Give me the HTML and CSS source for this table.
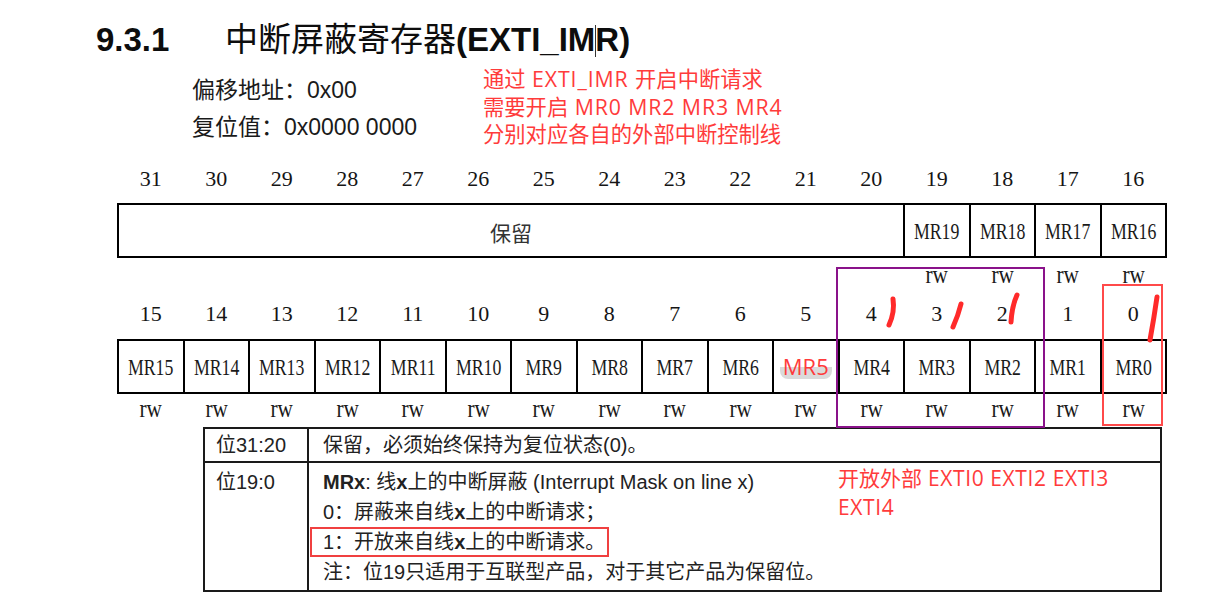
FILE: index.html
```html
<!DOCTYPE html>
<html lang="zh">
<head>
<meta charset="utf-8">
<title>EXTI_IMR</title>
<link rel="stylesheet" href="styles.css">
</head>
<body>
<div class="page">
  <div class="title"><span class="num">9.3.1</span><span class="name">中断屏蔽寄存器<b>(EXTI_IM<span class="caret"></span>R)</b></span></div>
  <div class="info">
    <div class="meta">
      <div>偏移地址：0x00</div>
      <div>复位值：0x0000 0000</div>
    </div>
    <div class="note">通过<span class="lat"> EXTI_IMR </span>开启中断请求<br>需要开启<span class="lat"> MR0 MR2 MR3 MR4</span><br>分别对应各自的外部中断控制线</div>
  </div>

  <div class="reg">
    <div class="grid nums top">
      <span>31</span><span>30</span><span>29</span><span>28</span><span>27</span><span>26</span><span>25</span><span>24</span>
      <span>23</span><span>22</span><span>21</span><span>20</span><span>19</span><span>18</span><span>17</span><span>16</span>
    </div>
    <div class="grid tbl">
      <div class="cell reserved">保留</div>
      <div class="cell"><span class="mr">MR19</span></div>
      <div class="cell"><span class="mr">MR18</span></div>
      <div class="cell"><span class="mr">MR17</span></div>
      <div class="cell"><span class="mr">MR16</span></div>
    </div>
    <div class="grid rws r1">
      <span class="skip"></span>
      <span><i class="rw">rw</i></span><span><i class="rw">rw</i></span><span><i class="rw">rw</i></span><span><i class="rw">rw</i></span>
    </div>
    <div class="grid nums mid">
      <span>15</span><span>14</span><span>13</span><span>12</span><span>11</span><span>10</span><span>9</span><span>8</span>
      <span>7</span><span>6</span><span>5</span><span>4</span><span>3</span><span>2</span><span>1</span><span>0</span>
    </div>
    <div class="grid tbl">
      <div class="cell"><span class="mr">MR15</span></div>
      <div class="cell"><span class="mr">MR14</span></div>
      <div class="cell"><span class="mr">MR13</span></div>
      <div class="cell"><span class="mr">MR12</span></div>
      <div class="cell"><span class="mr">MR11</span></div>
      <div class="cell"><span class="mr">MR10</span></div>
      <div class="cell"><span class="mr">MR9</span></div>
      <div class="cell"><span class="mr">MR8</span></div>
      <div class="cell"><span class="mr">MR7</span></div>
      <div class="cell"><span class="mr">MR6</span></div>
      <div class="cell"><span class="mr5">MR5</span></div>
      <div class="cell"><span class="mr">MR4</span></div>
      <div class="cell"><span class="mr">MR3</span></div>
      <div class="cell"><span class="mr">MR2</span></div>
      <div class="cell"><span class="mr">MR1</span></div>
      <div class="cell"><span class="mr">MR0</span></div>
    </div>
    <div class="grid rws r2">
      <span><i class="rw">rw</i></span><span><i class="rw">rw</i></span><span><i class="rw">rw</i></span><span><i class="rw">rw</i></span>
      <span><i class="rw">rw</i></span><span><i class="rw">rw</i></span><span><i class="rw">rw</i></span><span><i class="rw">rw</i></span>
      <span><i class="rw">rw</i></span><span><i class="rw">rw</i></span><span><i class="rw">rw</i></span><span><i class="rw">rw</i></span>
      <span><i class="rw">rw</i></span><span><i class="rw">rw</i></span><span><i class="rw">rw</i></span><span><i class="rw">rw</i></span>
    </div>

    <div class="desc">
      <div class="dcell c1 row1">位31:20</div>
      <div class="dcell c2 row1">保留，必须始终保持为复位状态(0)。</div>
      <div class="dcell c1 row2">位19:0</div>
      <div class="dcell c2 row2">
        <div><b>MRx</b>: 线<b>x</b>上的中断屏蔽 (Interrupt Mask on line x)</div>
        <div>0：屏蔽来自线<b>x</b>上的中断请求；</div>
        <div class="hl">1：开放来自线<b>x</b>上的中断请求。</div>
        <div>注：位19只适用于互联型产品，对于其它产品为保留位。</div>
        <div class="note2">开放外部<span class="lat2"> EXTI0 EXTI2 EXTI3</span><br><span class="lat2">EXTI4</span></div>
      </div>
    </div>

    <div class="box purple"></div>
    <div class="box redbox"></div>
    <svg class="marks" width="1050" height="200" viewBox="0 0 1050 200">
      <path d="M776 139 Q778 152 772 165"/>
      <path d="M844 144 Q841 156 836 167"/>
      <path d="M900 135 Q895 146 894 162"/>
      <path d="M1040 137 Q1037 158 1033 180"/>
    </svg>
  </div>
</div>
</body>
</html>
```

FILE: styles.css
```css
* { box-sizing: border-box; }

body {
  margin: 0;
  background: #ffffff;
  color: #111111;
  font-family: "Liberation Sans", "Noto Sans CJK SC", sans-serif;
}

.page {
  width: 1209px;
  height: 614px;
  overflow: hidden;
}

/* ---------- title ---------- */
.title {
  display: flex;
  padding: 20px 0 0 96px;
  height: 60px;
  font-size: 33px;
  line-height: 40px;
  white-space: nowrap;
  color: #0d0d0d;
}
.title .num {
  width: 129px;
  font-weight: 700;
}
.title .name {
  font-weight: 400;
}
.title .name b {
  font-weight: 700;
}
.caret {
  display: inline-block;
  width: 1px;
  height: 32px;
  background: #333;
  vertical-align: -6px;
  margin: 0 -0.5px;
}

/* ---------- info + red note ---------- */
.info {
  display: flex;
  margin-top: 5px;
  height: 95px;
  padding-left: 192px;
}
.meta {
  width: 291px;
  padding-top: 6.5px;
  font-size: 23px;
  line-height: 37px;
  color: #1a1a1a;
  white-space: nowrap;
}
.note {
  font-family: "Open Sans", "Noto Sans CJK SC", sans-serif;
  font-size: 21.3px;
  line-height: 27.5px;
  color: #ff3b3b;
  white-space: nowrap;
}
.note .lat {
  letter-spacing: 0.9px;
}

/* ---------- register ---------- */
.reg {
  position: relative;
  margin-left: 117px;
  width: 1050px;
}
.grid {
  display: grid;
  grid-template-columns: repeat(16, 63.5px);
  column-gap: 2px;
  padding: 0 2px;
  text-align: center;
}
.nums {
  font-family: "Liberation Serif", serif;
  font-size: 22px;
  color: #151515;
}
.nums.top {
  height: 43px;
  line-height: 38px;
}
.nums.mid {
  height: 47px;
  line-height: 44px;
}

.tbl {
  background: #000;
  gap: 2px;
  padding: 2px;
  height: 55px;
}
.cell {
  background: #fff;
  display: flex;
  align-items: center;
  justify-content: center;
  font-family: "Liberation Serif", serif;
  color: #1a1a1a;
}
.cell.reserved {
  grid-column: span 12;
  font-family: "Noto Sans CJK SC", sans-serif;
  font-size: 21px;
  color: #333;
  padding-top: 2px;
}
.mr {
  display: inline-block;
  font-size: 24px;
  transform: scaleX(0.74);
  white-space: nowrap;
  padding-top: 2px;
}
.mr5 {
  display: inline-block;
  font-family: "Open Sans", "Liberation Sans", sans-serif;
  font-size: 22px;
  line-height: 25px;
  color: #ff3b3b;
  padding: 0 3px;
  border-radius: 8px;
  background: linear-gradient(to bottom, transparent 50%, #dadada 50%);
}

.rws {
  font-family: "Liberation Serif", serif;
  color: #1a1a1a;
}
.rws.r1 {
  height: 34px;
  line-height: 34px;
}
.rws.r1 .skip {
  grid-column: span 12;
}
.rws.r2 {
  height: 33px;
  line-height: 30px;
}
.rw {
  display: inline-block;
  font-style: normal;
  font-size: 26px;
  transform: scaleX(0.82);
}

/* ---------- description table ---------- */
.desc {
  display: grid;
  grid-template-columns: 102px 851px;
  grid-template-rows: 32px 127px;
  gap: 2px;
  padding: 2px;
  margin-left: 86px;
  width: 959px;
  height: 165px;
  background: #1a1a1a;
  font-size: 20px;
  color: #222;
}
.dcell {
  background: #fff;
  white-space: nowrap;
}
.dcell.c1 {
  padding-left: 11px;
}
.dcell.c2 {
  padding-left: 14px;
}
.row1 {
  line-height: 32px;
}
.row2 {
  padding-top: 4px;
  line-height: 30px;
}
.c2.row2 {
  position: relative;
}
.hl {
  width: fit-content;
  margin-left: -13px;
  padding: 0 2px 0 11px;
  border: 2px solid #f04040;
  line-height: 26px;
}
.note2 {
  position: absolute;
  left: 529px;
  top: 1px;
  font-family: "Open Sans", "Noto Sans CJK SC", sans-serif;
  font-size: 21px;
  line-height: 29px;
  color: #ff3b3b;
}
.note2 .lat2 {
  letter-spacing: 0.6px;
}

/* ---------- annotations ---------- */
.box {
  position: absolute;
  pointer-events: none;
}
.purple {
  left: 719px;
  top: 107px;
  width: 209px;
  height: 161px;
  border: 2px solid #8a128a;
}
.redbox {
  left: 985px;
  top: 124px;
  width: 61px;
  height: 142px;
  border: 2px solid #ff4a4a;
}
.marks {
  position: absolute;
  left: 0;
  top: 0;
  pointer-events: none;
}
.marks path {
  fill: none;
  stroke: #ff2a2a;
  stroke-width: 5;
  stroke-linecap: round;
}
```
